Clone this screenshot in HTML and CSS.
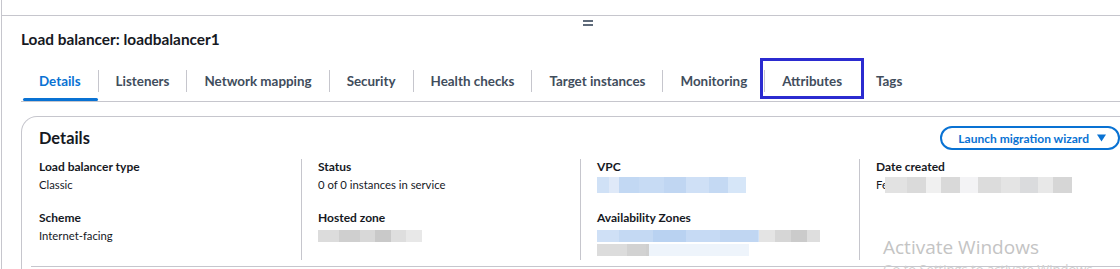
FILE: index.html
```html
<!DOCTYPE html>
<html lang="en">
<head>
<meta charset="utf-8">
<title>Load balancer: loadbalancer1</title>
<link rel="stylesheet" href="styles.css">
</head>
<body>
<div class="panel">
  <div class="panel-top"></div>
  <div class="handle"><span class="bar"></span><span class="bar"></span></div>
  <div class="content">
    <h1 class="title">Load balancer: loadbalancer1</h1>
    <div class="tabs">
      <div class="tab active">Details</div>
      <span class="sep"></span>
      <div class="tab">Listeners</div>
      <span class="sep"></span>
      <div class="tab">Network mapping</div>
      <span class="sep"></span>
      <div class="tab">Security</div>
      <span class="sep"></span>
      <div class="tab">Health checks</div>
      <span class="sep"></span>
      <div class="tab">Target instances</div>
      <span class="sep"></span>
      <div class="tab">Monitoring</div>
      <span class="sep"></span>
      <div class="tab highlighted">Attributes</div>
      <div class="tab">Tags</div>
    </div>
    <div class="card">
      <div class="card-head">
        <h2 class="card-title">Details</h2>
        <button class="btn">Launch migration wizard
          <svg class="caret" width="9" height="8" viewBox="0 0 9 8" aria-hidden="true"><path d="M0 0.5 H9 L4.5 7.5 Z" fill="currentColor"/></svg>
        </button>
      </div>
      <div class="cols">
        <div class="col">
          <div class="kv"><div class="k">Load balancer type</div><div class="v">Classic</div></div>
          <div class="kv"><div class="k">Scheme</div><div class="v">Internet-facing</div></div>
        </div>
        <div class="col">
          <div class="kv"><div class="k">Status</div><div class="v">0 of 0 instances in service</div></div>
          <div class="kv"><div class="k">Hosted zone</div><div class="v"><span class="blur blur-zone"></span></div></div>
        </div>
        <div class="col">
          <div class="kv"><div class="k">VPC</div><div class="v"><span class="blur blur-vpc"></span></div></div>
          <div class="kv"><div class="k">Availability Zones</div><div class="v"><span class="blur blur-az1"></span></div><div class="v v-low"><span class="blur blur-az2"></span></div></div>
        </div>
        <div class="col">
          <div class="kv"><div class="k">Date created</div><div class="v">Fe<span class="blur blur-date"></span></div></div>
        </div>
      </div>
      <div class="rule"></div>
    </div>
  </div>
  <div class="watermark">
    <div class="wm1">Activate Windows</div>
    <div class="wm2">Go to Settings to activate Windows.</div>
  </div>
</div>
</body>
</html>
```
FILE: styles.css
```css
html, body {
  margin: 0;
  padding: 0;
  background: #fff;
  overflow: hidden;
}
body {
  font-family: Lato, "Open Sans", sans-serif;
  color: #16191f;
}
.panel {
  position: relative;
  margin-left: 1px;
  width: 1200px;
  height: 269px;
  border-left: 1px solid #c6c6cd;
  overflow: hidden;
}
.panel-top {
  height: 15px;
  border-bottom: 1px solid #c6c6cd;
}
.handle {
  display: flex;
  flex-direction: column;
  gap: 2px;
  padding: 4px 0 0 581px;
}
.bar {
  display: block;
  width: 10px;
  height: 2px;
  background: #5f6b7a;
}
.content {
  padding-left: 19px;
}
.title {
  margin: 3px 0 0 0;
  font-size: 15.4px;
  line-height: 20px;
  font-weight: 700;
}
.tabs {
  display: flex;
  align-items: center;
  height: 41px;
  margin-top: 11px;
  width: 1120px;
  border-bottom: 1px solid #c6c6cd;
}
.tab {
  position: relative;
  height: 41px;
  display: flex;
  align-items: center;
  padding: 0 17px;
  font-size: 13.4px;
  font-weight: 700;
  color: #414d5c;
  white-space: nowrap;
}
.tab:first-child { margin-left: 1px; }
.tab.active { color: #0972d3; }
.tab.active::after {
  content: "";
  position: absolute;
  left: 1px;
  right: 0;
  bottom: 0;
  height: 3px;
  border-radius: 2px;
  background: #0972d3;
}
.tab.highlighted::before {
  content: "";
  position: absolute;
  left: -5px;
  top: -2px;
  width: 98px;
  height: 35px;
  border: 3px solid #2b2bd0;
}
.sep {
  width: 1px;
  height: 22px;
  background: #c6c6cd;
}
.card {
  margin-top: 14px;
  width: 1081px;
  border: 1px solid #c6c6cd;
  border-bottom: none;
  border-radius: 16px 16px 0 0;
  padding: 10px 17px 0 17px;
  height: 200px;
}
.card-head {
  display: flex;
  justify-content: space-between;
  align-items: flex-start;
}
.card-title {
  margin: 0;
  font-size: 16.4px;
  line-height: 22px;
  font-weight: 700;
}
.btn {
  display: flex;
  align-items: center;
  gap: 8px;
  height: 24px;
  margin-top: -1px;
  padding: 0 12px 0 16px;
  border: 2px solid #0972d3;
  border-radius: 13px;
  background: #fff;
  color: #0972d3;
  font-family: inherit;
  font-size: 12px;
  font-weight: 700;
}
.caret { display: block; }
.cols {
  display: grid;
  grid-template-columns: 262px 279px 279px 279px;
  margin-top: 9px;
}
.col {
  display: flex;
  flex-direction: column;
  gap: 17px;
}
.col + .col {
  border-left: 1px solid #c6c6cd;
  padding-left: 16px;
}
.k {
  font-size: 12px;
  line-height: 16px;
  font-weight: 700;
}
.v {
  margin-top: 2px;
  height: 16px;
  font-size: 11.3px;
  line-height: 16px;
  display: flex;
  align-items: center;
}
.v + .v { margin-top: 0; }
.v-low { align-items: flex-start; }
.blur {
  display: inline-block;
  height: 12px;
}
.blur-zone {
  width: 104px;
  background: linear-gradient(90deg, #dcdcdc 0 20%, #cfcfcf 20% 40%, #d8d8d8 40% 55%, #c9c9c9 55% 70%, #dedede 70% 85%, #e8e8e8 85% 100%);
}
.blur-vpc {
  width: 149px;
  height: 16px;
  background: linear-gradient(90deg, #d0e1f6 0 8%, #dfe9f8 8% 15%, #c2d8f3 15% 28%, #c7dbf4 28% 45%, #c0d6f2 45% 60%, #cfe0f6 60% 75%, #c4d9f3 75% 88%, #d6e6f8 88% 100%);
}
.blur-az1 {
  width: 223px;
  background: linear-gradient(90deg, #cfe0f6 0 10%, #c4d9f3 10% 25%, #b9d2f1 25% 40%, #c6daf4 40% 55%, #c0d6f2 55% 72%, #cde0f7 72% 72.5%, #e4e4e4 72.5% 80%, #d6d6d6 80% 87%, #cbcbcb 87% 94%, #dedede 94% 100%);
}
.blur-az2 {
  width: 152px;
  background: linear-gradient(90deg, #dcdcdc 0 20%, #d2d2d2 20% 32%, #cfcfcf 32% 34%, #eef4fb 34% 100%);
}
.blur-date {
  width: 187px;
  height: 16px;
  margin-left: -3px;
  background: linear-gradient(90deg, #e2e2e2 0 12%, #dadada 12% 22%, #f0f0f0 22% 30%, #d9d9d9 30% 40%, #f3f3f5 40% 50%, #dcdcdc 50% 62%, #e4e4e4 62% 72%, #dadbdd 72% 82%, #e8e8e8 82% 90%, #d6d6d6 90% 100%);
}
.rule {
  margin: 6px 0 0 -8px;
  width: 1200px;
  height: 1px;
  background: #c6c6cd;
}
.watermark {
  position: absolute;
  left: 881px;
  top: 234px;
  font-family: "Open Sans", sans-serif;
  color: #c4c4c4;
}
.wm1 {
  font-size: 19px;
  line-height: 26px;
}
.wm2 {
  font-size: 13px;
  line-height: 18px;
  color: #d0d0d0;
}
```
